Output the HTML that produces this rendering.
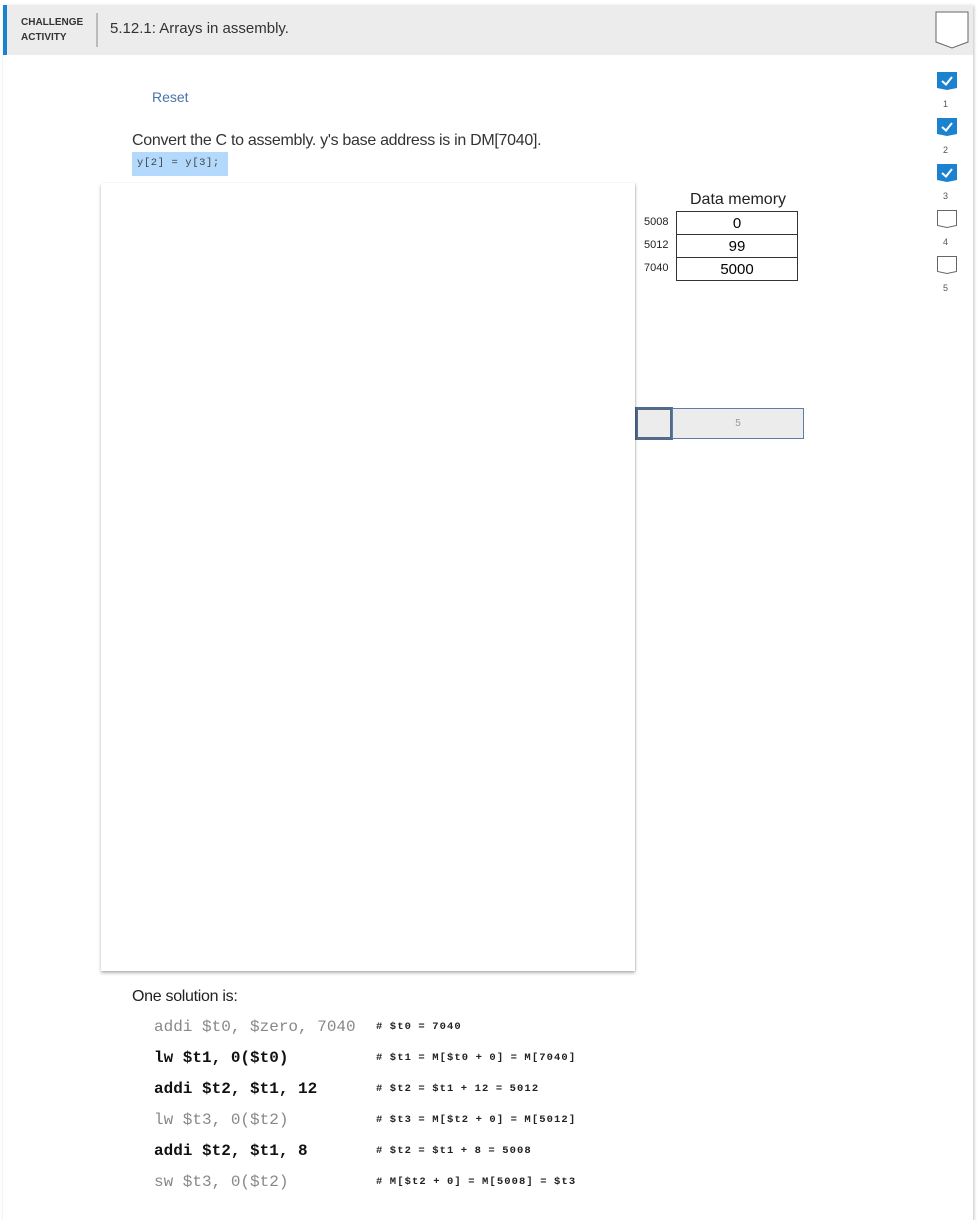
<!DOCTYPE html>
<html><head><style>
body{margin:0;width:979px;height:1220px;background:#fff;font-family:"Liberation Sans",sans-serif;position:relative;overflow:hidden}
.card{position:absolute;left:3px;top:5px;width:970px;height:1215px;background:#fff;box-shadow:1px 1px 3px rgba(0,0,0,.25)}
.hdr{position:absolute;left:0;top:0;width:970px;height:50px;background:#ececec;border-left:4px solid #1a82cf;box-sizing:border-box}
.abs{position:absolute}
.mono{font-family:"Liberation Mono",monospace}
.sol{position:absolute;left:154px;font-family:"Liberation Mono",monospace;font-size:16px}
.b{font-weight:bold;color:#111}
.g{color:#888}
.cm{position:absolute;left:376px;font-family:"Liberation Mono",monospace;font-size:10.5px;font-weight:bold;color:#222;letter-spacing:1.1px;word-spacing:-1px}
.chk{position:absolute;left:937px;width:20px;height:18px}
.num{position:absolute;left:943px;font-size:9px;color:#555}
td{border:1px solid #333;height:22px;text-align:center;font-size:15px;padding:0}
</style></head><body>
<div class="card">
<div class="hdr">
<div class="abs" style="left:14px;top:10px;font-size:10px;font-weight:bold;color:#333;line-height:15px">CHALLENGE<br>ACTIVITY</div>
<div class="abs" style="left:89px;top:8px;width:2px;height:34px;background:#bbb"></div>
<div class="abs" style="left:103px;top:15px;font-size:15px;color:#333">5.12.1: Arrays in assembly.</div>
<svg class="abs" style="left:928px;top:6px" width="34" height="40"><path d="M1 1H33V31L17 37L1 31Z" fill="#fff" stroke="#666" stroke-width="1"/></svg>
</div>
</div>
<div class="abs" style="left:152px;top:89px;font-size:14px;color:#4b73a6">Reset</div>
<div class="abs" style="left:132px;top:132px;font-size:16px;color:#333;letter-spacing:-0.3px">Convert the C to assembly. y's base address is in DM[7040].</div>
<div class="abs mono" style="left:132px;top:152px;width:96px;height:24px;background:#b3dafc;font-size:10.5px;color:#444;line-height:22px;padding-left:5px;box-sizing:border-box;letter-spacing:0.6px">y[2] = y[3];</div>

<div class="abs" style="left:635px;top:407px;width:38px;height:33px;background:#ececec;border:3px solid #536a8a;box-sizing:border-box"></div>
<div class="abs" style="left:672px;top:408px;width:132px;height:31px;background:#ececec;border:1px solid #5a7ea6;box-sizing:border-box;text-align:center;font-size:10px;color:#999;line-height:30px">5</div>
<div class="abs" style="left:101px;top:183px;width:534px;height:788px;background:#fff;box-shadow:0 2px 3px rgba(0,0,0,.3),1px 0 1px rgba(0,0,0,.1)"></div>

<div class="abs" style="left:690px;top:191px;font-size:16px;color:#222">Data memory</div>
<div class="abs" style="left:644px;top:211px;font-size:11px;color:#222;line-height:23px">5008<br>5012<br>7040</div>
<table class="abs" style="left:676px;top:211px;border-collapse:collapse;width:122px"><tr><td>0</td></tr><tr><td>99</td></tr><tr><td>5000</td></tr></table>

<svg class="chk" style="top:72px" viewBox="0 0 20 18"><path d="M0 0H20V16L10 18L0 16Z" fill="#1a82cf"/><path d="M5 9L9 12.5L15 5" stroke="#fff" stroke-width="2" fill="none"/></svg>
<div class="num" style="top:99px">1</div>
<svg class="chk" style="top:118px" viewBox="0 0 20 18"><path d="M0 0H20V16L10 18L0 16Z" fill="#1a82cf"/><path d="M5 9L9 12.5L15 5" stroke="#fff" stroke-width="2" fill="none"/></svg>
<div class="num" style="top:145px">2</div>
<svg class="chk" style="top:164px" viewBox="0 0 20 18"><path d="M0 0H20V16L10 18L0 16Z" fill="#1a82cf"/><path d="M5 9L9 12.5L15 5" stroke="#fff" stroke-width="2" fill="none"/></svg>
<div class="num" style="top:191px">3</div>
<svg class="chk" style="top:210px" viewBox="0 0 20 18"><path d="M.5 .5H19.5V15.5L10 17.5L.5 15.5Z" fill="#fff" stroke="#666"/></svg>
<div class="num" style="top:237px">4</div>
<svg class="chk" style="top:256px" viewBox="0 0 20 18"><path d="M.5 .5H19.5V15.5L10 17.5L.5 15.5Z" fill="#fff" stroke="#666"/></svg>
<div class="num" style="top:283px">5</div>

<div class="abs" style="left:132px;top:988px;font-size:16px;color:#222;letter-spacing:-0.3px">One solution is:</div>
<div class="sol g" style="top:1018px">addi $t0, $zero, 7040</div>
<div class="sol b" style="top:1049px">lw $t1, 0($t0)</div>
<div class="sol b" style="top:1080px">addi $t2, $t1, 12</div>
<div class="sol g" style="top:1111px">lw $t3, 0($t2)</div>
<div class="sol b" style="top:1142px">addi $t2, $t1, 8</div>
<div class="sol g" style="top:1173px">sw $t3, 0($t2)</div>
<div class="cm" style="top:1021px"># $t0 = 7040</div>
<div class="cm" style="top:1052px"># $t1 = M[$t0 + 0] = M[7040]</div>
<div class="cm" style="top:1083px"># $t2 = $t1 + 12 = 5012</div>
<div class="cm" style="top:1114px"># $t3 = M[$t2 + 0] = M[5012]</div>
<div class="cm" style="top:1145px"># $t2 = $t1 + 8 = 5008</div>
<div class="cm" style="top:1176px"># M[$t2 + 0] = M[5008] = $t3</div>
</body></html>
